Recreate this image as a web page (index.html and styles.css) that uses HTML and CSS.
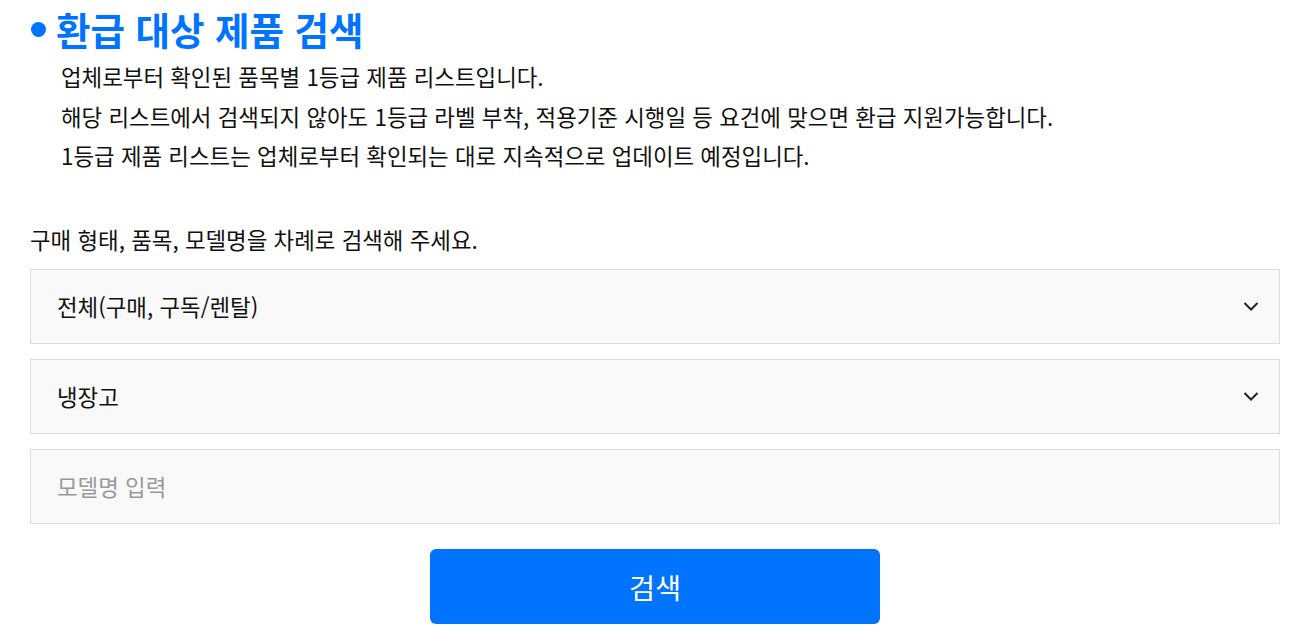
FILE: index.html
```html
<!DOCTYPE html>
<html lang="ko">
<head>
<meta charset="utf-8">
<link rel="stylesheet" href="styles.css">
</head>
<body>
<div class="page">
  <h2 class="title"><span class="dot"></span>환급 대상 제품 검색</h2>
  <ul class="notes">
    <li>업체로부터 확인된 품목별 1등급 제품 리스트입니다.</li>
    <li>해당 리스트에서 검색되지 않아도 1등급 라벨 부착, 적용기준 시행일 등 요건에 맞으면 환급 지원가능합니다.</li>
    <li>1등급 제품 리스트는 업체로부터 확인되는 대로 지속적으로 업데이트 예정입니다.</li>
  </ul>
  <p class="guide">구매 형태, 품목, 모델명을 차례로 검색해 주세요.</p>
  <div class="form">
    <div class="field select">
      <span>전체(구매, 구독/렌탈)</span>
      <svg class="chev" width="16" height="10" viewBox="0 0 16 10"><path d="M1.5 2 L8 8.5 L14.5 2" fill="none" stroke="#222" stroke-width="2"/></svg>
    </div>
    <div class="field select">
      <span>냉장고</span>
      <svg class="chev" width="16" height="10" viewBox="0 0 16 10"><path d="M1.5 2 L8 8.5 L14.5 2" fill="none" stroke="#222" stroke-width="2"/></svg>
    </div>
    <div class="field input"><span class="ph">모델명 입력</span></div>
    <div class="btnrow"><button class="btn">검색</button></div>
  </div>
</div>
</body>
</html>
```
FILE: styles.css
```css
* { box-sizing: border-box; }
html, body { margin: 0; padding: 0; background: #fff; }
body { font-family: "Noto Sans CJK KR", "Noto Sans", sans-serif; color: #111; }
.page { margin: 0 16px 0 30px; }
.title {
  margin: 0; padding-top: 5px;
  display: flex; align-items: center; gap: 10px;
  font-size: 37.5px; line-height: 48px; font-weight: 700; color: #0073ff;
}
.dot { width: 15px; height: 15px; border-radius: 50%; background: #0073ff; margin-left: 1px; }
.notes { list-style: none; margin: 4px 0 0; padding: 0 0 0 31px; }
.notes li { font-size: 22.4px; line-height: 39.5px; color: #111; }
.guide { margin: 48px 0 0; font-size: 22.4px; line-height: 30px; color: #111; }
.form { display: flex; flex-direction: column; gap: 15px; margin-top: 15px; }
.field {
  height: 75px; border: 1px solid #ddd; background: #f9f9f9;
  display: flex; align-items: center; justify-content: space-between;
  padding: 0 20px 0 26px; font-size: 22.4px;
}
.ph { color: #999; }
.btnrow { display: flex; justify-content: center; margin-top: 10px; }
.btn {
  width: 450px; height: 75px; border: 0; border-radius: 6px;
  background: #0073ff; color: #fff; font-family: inherit; font-size: 28.4px;
}
```
